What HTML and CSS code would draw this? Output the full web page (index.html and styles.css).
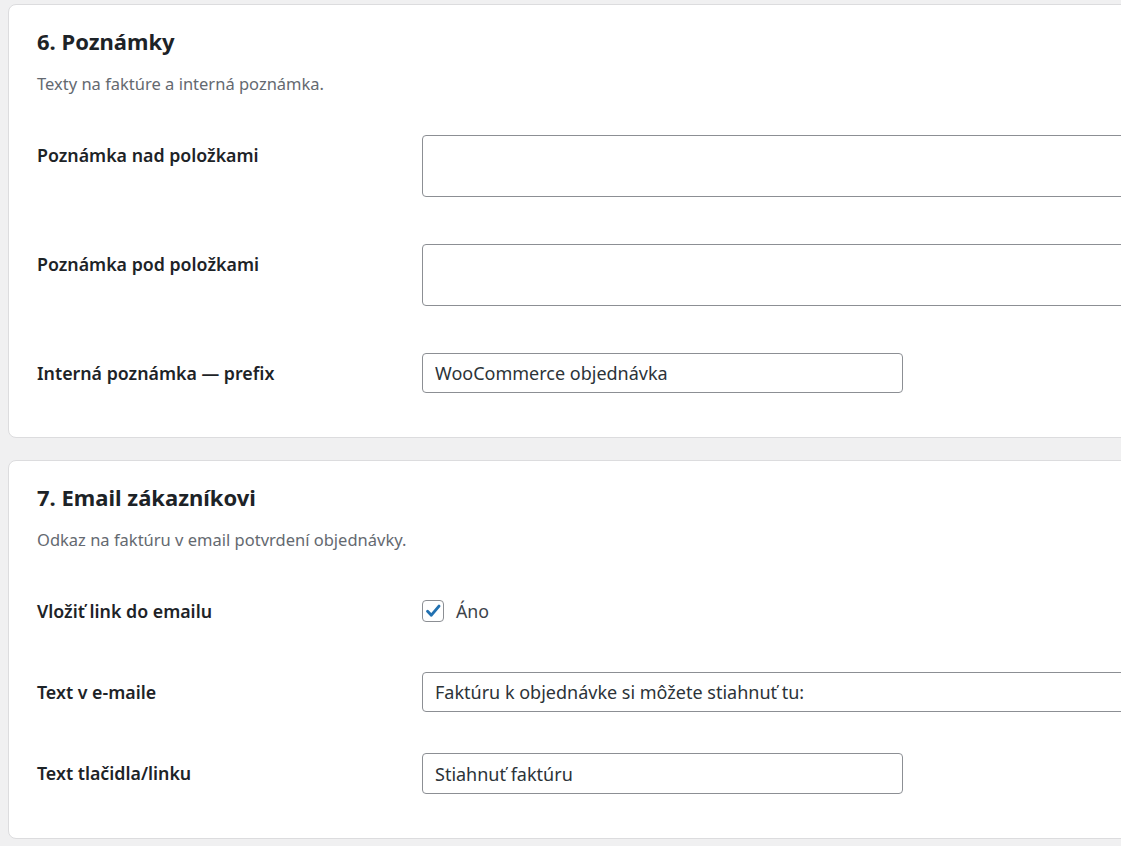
FILE: index.html
```html
<!DOCTYPE html>
<html lang="sk">
<head>
    <meta charset="UTF-8">
    <meta name="viewport" content="width=device-width, initial-scale=1.0">
    <title>Nastavenia faktúr</title>
    <link rel="stylesheet" href="styles.css">
</head>
<body>
    <div class="wrap">
        <div class="card">
            <h2>6. Poznámky</h2>
            <p class="desc">Texty na faktúre a interná poznámka.</p>
            <div class="form">
                <div class="row">
                    <label class="label" for="note-above">Poznámka nad položkami</label>
                    <div class="field"><textarea id="note-above" class="textarea"></textarea></div>
                </div>
                <div class="row">
                    <label class="label" for="note-below">Poznámka pod položkami</label>
                    <div class="field"><textarea id="note-below" class="textarea"></textarea></div>
                </div>
                <div class="row">
                    <label class="label" for="note-prefix">Interná poznámka — prefix</label>
                    <div class="field"><input id="note-prefix" class="input" type="text" value="WooCommerce objednávka"></div>
                </div>
            </div>
        </div>
        <div class="card">
            <h2>7. Email zákazníkovi</h2>
            <p class="desc">Odkaz na faktúru v email potvrdení objednávky.</p>
            <div class="form form-tight">
                <div class="row">
                    <div class="label">Vložiť link do emailu</div>
                    <div class="field check-field">
                        <span class="checkbox">
                            <svg width="22" height="22" viewBox="0 0 22 22"><path d="M5 11.2 L9.2 15.6 L17.6 5.6" fill="none" stroke="#2271b1" stroke-width="3.2" stroke-linecap="round" stroke-linejoin="round"/></svg>
                        </span>
                        <span class="check-text">Áno</span>
                    </div>
                </div>
                <div class="row">
                    <label class="label" for="mail-text">Text v e-maile</label>
                    <div class="field"><input id="mail-text" class="input input-wide" type="text" value="Faktúru k objednávke si môžete stiahnuť tu:"></div>
                </div>
                <div class="row">
                    <label class="label" for="btn-text">Text tlačidla/linku</label>
                    <div class="field"><input id="btn-text" class="input input-tall" type="text" value="Stiahnuť faktúru"></div>
                </div>
            </div>
        </div>
    </div>
</body>
</html>
```

FILE: styles.css
```css
* {
    margin: 0;
    padding: 0;
    box-sizing: border-box;
}
body {
    font-family: "Noto Sans", "Open Sans", sans-serif;
    background-color: #f0f0f1;
    color: #1d2327;
    overflow: hidden;
}
.wrap {
    padding: 4px 0 0 8px;
    margin-right: -60px;
}
.card {
    background-color: #fff;
    border: 1px solid #dcdcde;
    border-radius: 8px;
    padding: 21px 28px 44px;
    margin-bottom: 22px;
}
.card h2 {
    font-size: 22px;
    font-weight: 700;
    line-height: 30px;
    color: #1d2327;
}
.desc {
    font-size: 16.5px;
    line-height: 22px;
    color: #646970;
    margin-top: 17px;
}
.form {
    display: flex;
    flex-direction: column;
    gap: 47px;
    margin-top: 40px;
}
.form-tight {
    gap: 41px;
}
.row {
    display: grid;
    grid-template-columns: 385px 1fr;
    align-items: start;
}
.label {
    font-size: 17.8px;
    font-weight: 600;
    line-height: 22px;
    padding-top: 9px;
    color: #1d2327;
}
.textarea {
    display: block;
    width: 100%;
    height: 62px;
    border: 1px solid #8c8f94;
    border-radius: 4px;
    background-color: #fff;
    resize: none;
    font-family: inherit;
}
.input {
    display: block;
    width: 481px;
    height: 40px;
    border: 1px solid #8c8f94;
    border-radius: 4px;
    background-color: #fff;
    padding: 0 12px;
    font-family: inherit;
    font-size: 18px;
    color: #2c3338;
}
.input-wide {
    width: 100%;
}
.input-tall {
    height: 41px;
}
.check-field {
    display: flex;
    align-items: center;
    height: 40px;
    gap: 12px;
}
.checkbox {
    width: 22px;
    height: 22px;
    border: 1px solid #8c8f94;
    border-radius: 4px;
    background-color: #fff;
    display: flex;
    align-items: center;
    justify-content: center;
}
.checkbox svg {
    display: block;
}
.check-text {
    font-size: 17.8px;
    color: #3c434a;
}
```
